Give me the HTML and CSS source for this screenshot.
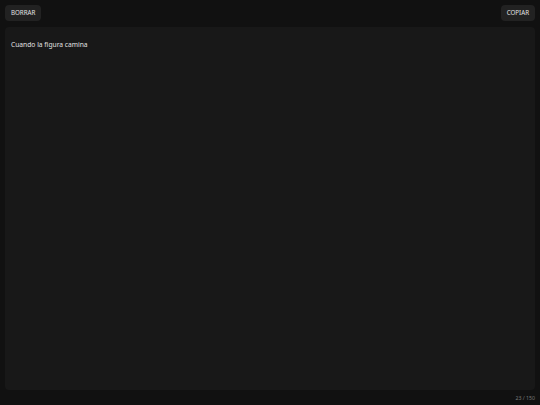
FILE: index.html
```html
<!DOCTYPE html>
<html lang="es">
<head>
<meta charset="utf-8">
<title>Editor</title>
<link rel="stylesheet" href="styles.css">
</head>
<body>
<div class="app">
  <div class="toolbar">
    <button class="btn">BORRAR</button>
    <button class="btn">COPIAR</button>
  </div>
  <textarea class="editor" spellcheck="false">Cuando la figura camina</textarea>
  <div class="footer">
    <span class="counter">23 / 150</span>
  </div>
</div>
</body>
</html>
```
FILE: styles.css
```css
* { box-sizing: border-box; }
html, body {
  margin: 0;
  height: 100%;
  background: #111111;
  font-family: "Noto Sans", "Open Sans", sans-serif;
}
.app {
  height: 405px;
  padding: 5px 5px 0 5px;
  display: flex;
  flex-direction: column;
}
.toolbar {
  display: flex;
  justify-content: space-between;
  align-items: center;
  height: 16px;
  margin-bottom: 6px;
}
.btn {
  height: 16px;
  padding: 0 6px;
  border: none;
  border-radius: 4px;
  background: #222222;
  color: #e2e2e2;
  font-family: "Noto Sans", sans-serif;
  font-size: 6.2px;
  line-height: 16px;
}
.editor {
  flex: 1;
  width: 100%;
  resize: none;
  border: none;
  outline: none;
  border-radius: 4px;
  background: #181818;
  color: #e2e2e2;
  font-family: "Noto Sans", sans-serif;
  font-size: 6.7px;
  line-height: 10px;
  padding: 13px 6px;
  margin: 0;
}
.footer {
  height: 15px;
  display: flex;
  justify-content: flex-end;
  align-items: center;
}
.counter {
  font-size: 5.2px;
  color: #7a7a7a;
}
```
